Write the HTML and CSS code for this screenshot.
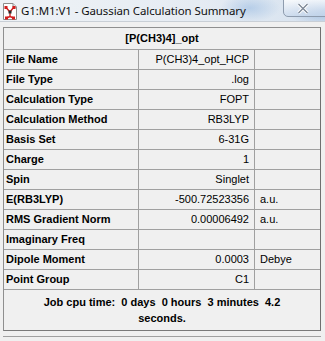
FILE: index.html
```html
<!DOCTYPE html>
<html>
<head>
<meta charset="utf-8">
<link rel="stylesheet" href="styles.css">
</head>
<body>
<div class="window">
  <div class="titlebar">
    <svg class="app-icon" width="16" height="17" viewBox="0 0 16 17">
      <path d="M1.5 0.5 H11 L14.5 4 V16.5 H1.5 Z" fill="#ffffff" stroke="#8c8c8c"/>
      <path d="M11 0.5 V4 H14.5" fill="#e6e6e6" stroke="#8c8c8c"/>
      <path d="M8 9 L4 4.5 M8 9 L11.5 4.5 M8 9 V13.5 M8 13.5 L4.5 15 M8 13.5 L11.5 15" stroke="#d21f1f" stroke-width="1.4" fill="none"/>
      <rect x="2.5" y="3" width="3" height="3" fill="#d21f1f"/>
      <rect x="10.5" y="3" width="3" height="3" fill="#d21f1f"/>
      <rect x="6.5" y="7.5" width="3" height="3" fill="#2a2a2a"/>
      <rect x="3" y="13.5" width="3" height="3" fill="#d21f1f"/>
      <rect x="10" y="13.5" width="3" height="3" fill="#d21f1f"/>
    </svg>
    <span class="title">G1:M1:V1 - Gaussian Calculation Summary</span>
    <div class="close-btn">
      <svg class="close-x" width="12" height="11" viewBox="0 0 12 11">
        <path d="M1.5 1 L10.5 10 M10.5 1 L1.5 10" stroke="#ffffff" stroke-width="3.2" fill="none"/>
        <path d="M1.5 1 L10.5 10 M10.5 1 L1.5 10" stroke="#7d8897" stroke-width="1.4" fill="none"/>
      </svg>
    </div>
  </div>
  <div class="client">
    <div class="panel">
      <div class="head">[P(CH3)4]_opt</div>
      <div class="grid">
        <div class="lab">File Name</div><div class="val">P(CH3)4_opt_HCP</div><div class="unit"></div>
        <div class="lab">File Type</div><div class="val">.log</div><div class="unit"></div>
        <div class="lab">Calculation Type</div><div class="val">FOPT</div><div class="unit"></div>
        <div class="lab">Calculation Method</div><div class="val">RB3LYP</div><div class="unit"></div>
        <div class="lab">Basis Set</div><div class="val">6-31G</div><div class="unit"></div>
        <div class="lab">Charge</div><div class="val">1</div><div class="unit"></div>
        <div class="lab">Spin</div><div class="val">Singlet</div><div class="unit"></div>
        <div class="lab">E(RB3LYP)</div><div class="val">-500.72523356</div><div class="unit">a.u.</div>
        <div class="lab">RMS Gradient Norm</div><div class="val">0.00006492</div><div class="unit">a.u.</div>
        <div class="lab">Imaginary Freq</div><div class="val"></div><div class="unit"></div>
        <div class="lab">Dipole Moment</div><div class="val">0.0003</div><div class="unit">Debye</div>
        <div class="lab">Point Group</div><div class="val">C1</div><div class="unit"></div>
      </div>
      <div class="job">Job cpu time:  0 days  0 hours  3 minutes  4.2 seconds.</div>
    </div>
    <div class="bottom-line"></div>
  </div>
</div>
</body>
</html>
```
FILE: styles.css
```css
html, body {
  margin: 0;
  padding: 0;
}
body {
  width: 325px;
  height: 341px;
  overflow: hidden;
  background: #f0f0f0;
  font-family: "Liberation Sans", Arial, sans-serif;
  color: #000;
}
.window {
  width: 325px;
  height: 341px;
  display: flex;
  flex-direction: column;
}
.titlebar {
  position: relative;
  height: 22px;
  flex: none;
  display: flex;
  align-items: center;
  background:
    radial-gradient(ellipse 30px 14px at 250px 8px, rgba(150,185,225,0.55), rgba(150,185,225,0) 100%),
    radial-gradient(ellipse 40px 16px at 325px 10px, rgba(120,160,210,0.6), rgba(120,160,210,0) 100%),
    linear-gradient(to right, #eef2f6 0%, #e6ecf3 60%, #d6e2ef 100%);
  border-bottom: 1px solid #c9cfd6;
  box-sizing: border-box;
}
.app-icon {
  margin-left: 2px;
  margin-top: 1px;
  flex: none;
}
.title {
  margin-left: 3px;
  font-family: "Noto Sans", "Open Sans", sans-serif;
  font-size: 11.5px;
  letter-spacing: -0.1px;
  color: #111;
  white-space: nowrap;
}
.close-btn {
  position: absolute;
  left: 283px;
  top: -1px;
  width: 44px;
  height: 18px;
  box-sizing: border-box;
  border: 1px solid #8e9cae;
  border-radius: 0 0 0 5px;
  background: linear-gradient(to bottom, rgba(255,255,255,0.75), rgba(200,216,236,0.65));
  display: flex;
  align-items: center;
  justify-content: center;
}
.close-x {
  margin-left: -4px;
  margin-top: 1px;
}
.client {
  flex: 1;
  padding: 5px 0 0 3px;
  box-sizing: border-box;
}
.panel {
  width: 318px;
  box-sizing: border-box;
  border: 1px solid #8f8f8f;
  border-right-color: #6f6f6f;
  border-bottom-color: #7a7a7a;
  background: #f0f0f0;
}
.head {
  height: 21px;
  border-bottom: 1px solid #a0a0a0;
  font-weight: bold;
  font-size: 11px;
  line-height: 20px;
  text-align: center;
}
.grid {
  display: grid;
  grid-template-columns: 135px 116px 1fr;
  grid-auto-rows: 20px;
  font-size: 11px;
}
.grid > div {
  border-bottom: 1px solid #a0a0a0;
  line-height: 19px;
  white-space: nowrap;
  overflow: hidden;
}
.lab {
  border-right: 1px solid #a0a0a0;
  font-weight: bold;
  padding-left: 2px;
}
.val {
  border-right: 1px solid #a0a0a0;
  text-align: right;
  padding-right: 5px;
}
.unit {
  padding-left: 5px;
}
.job {
  height: 40px;
  box-sizing: border-box;
  padding: 4px 20px 0;
  font-weight: bold;
  font-size: 11px;
  line-height: 16px;
  text-align: center;
  white-space: pre-wrap;
}
.bottom-line {
  margin-top: 5px;
  width: 318px;
  height: 1px;
  background: #a0a0a0;
}
```
